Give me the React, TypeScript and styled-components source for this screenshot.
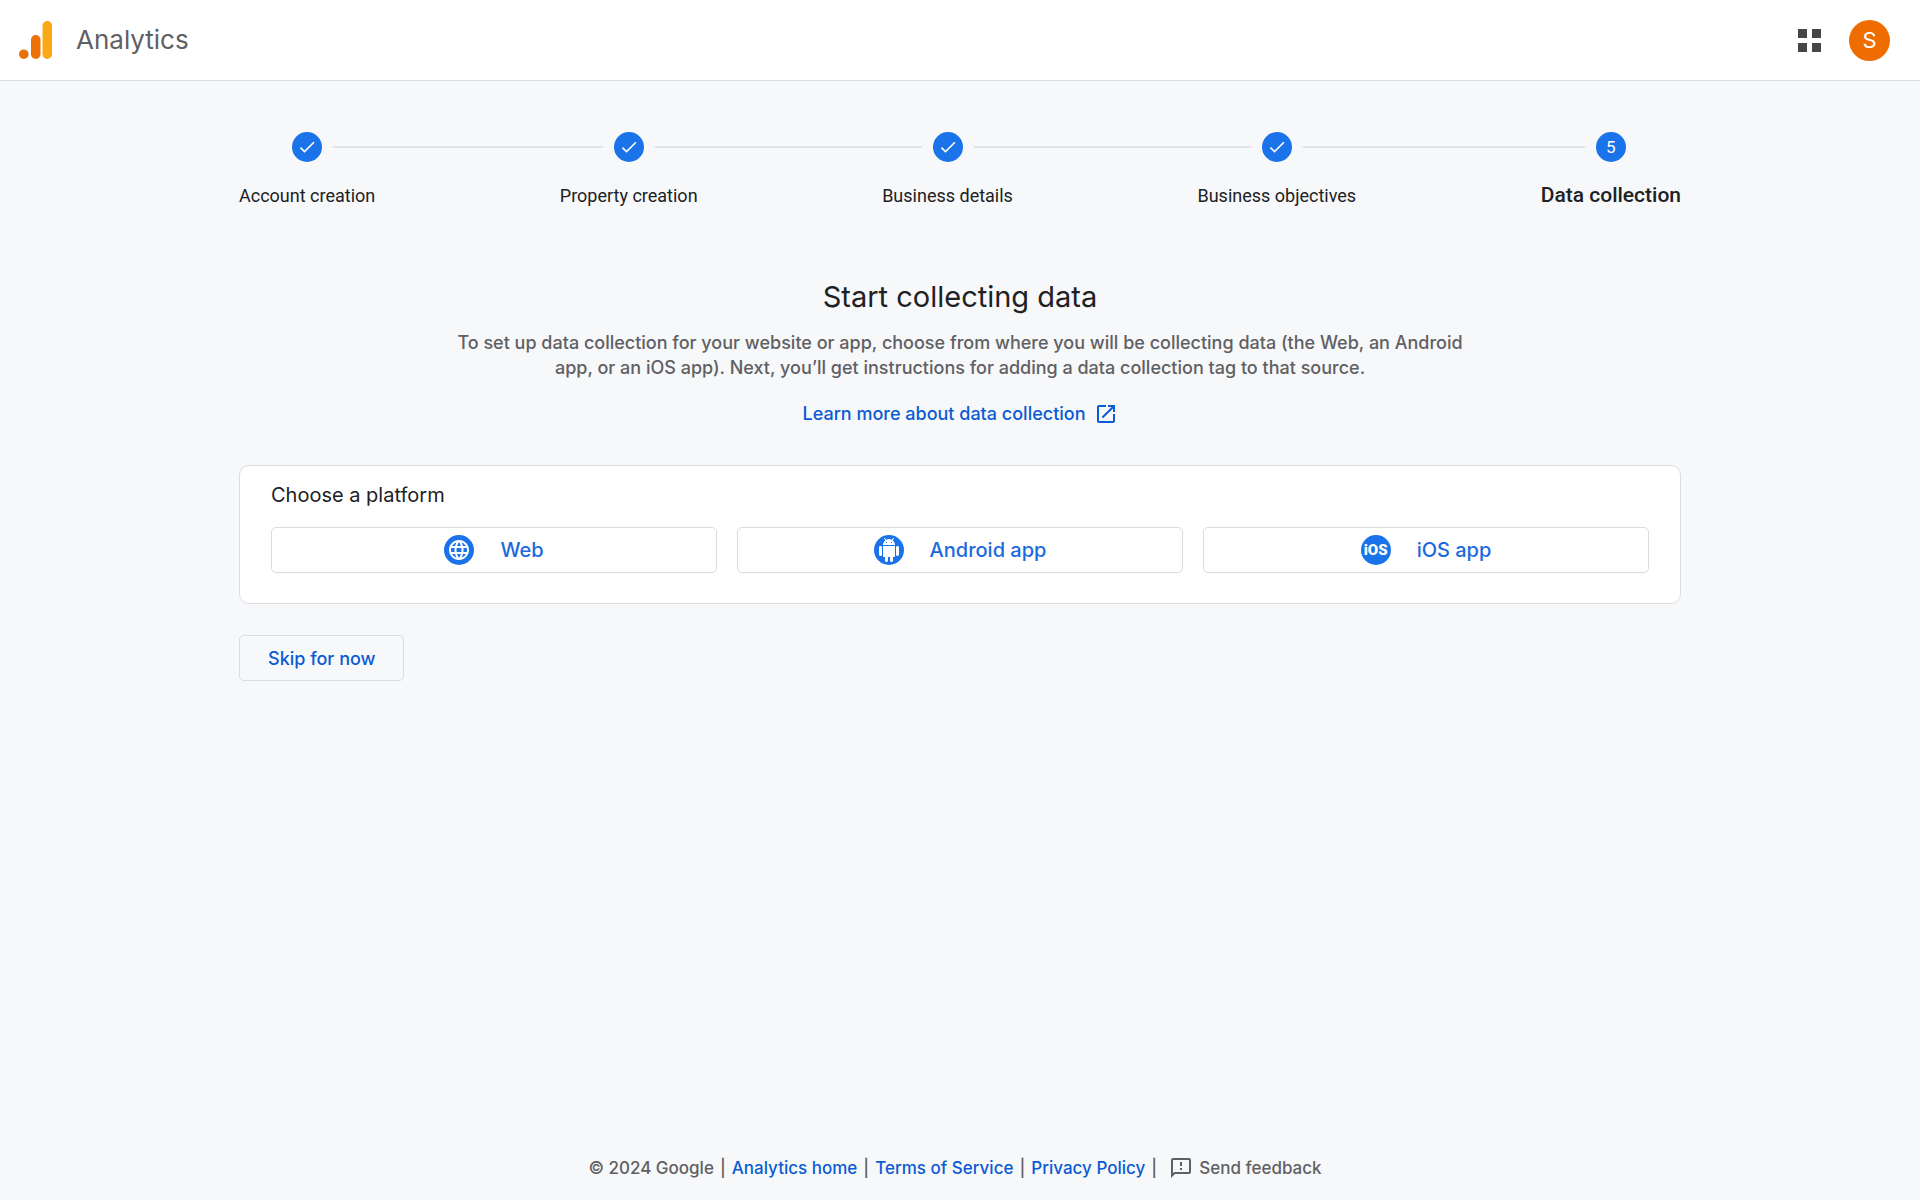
import React, { Fragment } from 'react';
import styled, { createGlobalStyle } from 'styled-components';

const color = {
  page: '#f7f8fa',
  surface: '#ffffff',
  text: '#202124',
  muted: '#5f6063',
  blue: '#1a73e8',
  link: '#0b5bd3',
  border: '#dadce0',
  orange: '#ef6c00',
};

const roboto = 'Roboto, "Liberation Sans", sans-serif';
const inter = 'Inter, "Liberation Sans", sans-serif';

const GlobalStyle = createGlobalStyle`
  *, *::before, *::after { box-sizing: border-box; }
  body {
    margin: 0;
    background: ${color.page};
    color: ${color.text};
    font-family: ${inter};
    font-size: 18px;
    line-height: 25px;
  }
  h1, h2, p, ol { margin: 0; padding: 0; }
  button { font: inherit; cursor: pointer; }
  a { color: ${color.link}; text-decoration: none; }
  a:hover { text-decoration: underline; }
`;

const Page = styled.div`
  min-height: 100vh;
  display: flex;
  flex-direction: column;
`;

const Header = styled.header`
  display: flex;
  align-items: center;
  justify-content: space-between;
  height: 81px;
  padding: 0 30px 0 19px;
  background: ${color.surface};
  border-bottom: 1px solid ${color.border};
`;

const Brand = styled.div`
  display: flex;
  align-items: center;
  gap: 24px;
  color: ${color.muted};
  font-size: 26px;
  line-height: 40px;
`;

const HeaderActions = styled.div`
  display: flex;
  align-items: center;
  gap: 20px;
`;

const IconButton = styled.button`
  display: grid;
  place-items: center;
  width: 40px;
  height: 40px;
  padding: 0;
  border: 0;
  background: none;
  color: #454746;
`;

const Avatar = styled.button`
  width: 41px;
  height: 41px;
  padding: 0;
  border: 0;
  border-radius: 50%;
  background: ${color.orange};
  color: #fff;
  font-size: 22px;
  line-height: 41px;
`;

const Main = styled.main`
  flex: 1;
  width: 100%;
  max-width: 1490px;
  margin: 0 auto;
  padding: 51px 24px 40px;
`;

const Stepper = styled.ol`
  display: flex;
  list-style: none;
  font-family: ${roboto};
`;

const Step = styled.li`
  flex: none;
`;

const Track = styled.div`
  display: flex;
  align-items: center;
  gap: 11px;
  height: 30px;
  margin-bottom: 21px;
`;

const Line = styled.span<{ $hidden?: boolean }>`
  flex: 1;
  height: 2px;
  background: ${(p) => (p.$hidden ? 'transparent' : '#e2e3e6')};
`;

const Connector = styled.li`
  flex: 1;
  display: flex;
  align-items: center;
  height: 30px;
`;

const Marker = styled.span`
  display: grid;
  place-items: center;
  width: 30px;
  height: 30px;
  border-radius: 50%;
  background: ${color.blue};
  color: #fff;
  font-size: 17px;
  line-height: 30px;
`;

const StepLabel = styled.span<{ $current: boolean }>`
  display: block;
  font-size: ${(p) => (p.$current ? 21 : 18)}px;
  font-weight: ${(p) => (p.$current ? 500 : 400)};
  line-height: 25px;
`;

const Intro = styled.section`
  display: flex;
  flex-direction: column;
  align-items: center;
  margin: 69px 0 39px;
  text-align: center;
  font-weight: 500;
`;

const Title = styled.h1`
  margin-bottom: 13px;
  font-size: 29px;
  font-weight: 400;
  line-height: 40px;
`;

const Lead = styled.p`
  max-width: 1020px;
  margin-bottom: 22px;
  color: ${color.muted};
`;

const LearnMore = styled.a`
  display: flex;
  align-items: center;
  gap: 8px;
  line-height: 24px;
`;

const Card = styled.section`
  padding: 15px 31px 30px;
  background: ${color.surface};
  border: 1px solid ${color.border};
  border-radius: 10px;
`;

const CardTitle = styled.h2`
  margin-bottom: 18px;
  font-size: 20px;
  font-weight: 400;
  line-height: 28px;
`;

const Platforms = styled.div`
  display: grid;
  grid-template-columns: repeat(3, 1fr);
  gap: 20px;
`;

const OutlineButton = styled.button`
  display: flex;
  align-items: center;
  justify-content: center;
  height: 46px;
  padding: 0 28px;
  border: 1px solid ${color.border};
  border-radius: 5px;
  background: transparent;
  color: ${color.link};
  font-weight: 500;
`;

const PlatformButton = styled(OutlineButton)`
  gap: 26px;
  color: #1a6ade;
  font-size: 20px;
`;

const SkipButton = styled(OutlineButton)`
  margin-top: 31px;
`;

const Footer = styled.footer`
  display: flex;
  flex-wrap: wrap;
  align-items: center;
  justify-content: center;
  gap: 6px;
  padding: 0 10px 20px 0;
  color: ${color.muted};
  font-size: 17px;
  font-weight: 500;
  line-height: 24px;
`;

const Feedback = styled.button`
  display: flex;
  align-items: center;
  gap: 6px;
  padding: 0 0 0 6px;
  border: 0;
  background: none;
  color: inherit;
`;

const Icon = ({ size = 24, d }: { size?: number; d: string }) => (
  <svg width={size} height={size} viewBox="0 0 24 24" fill="currentColor" aria-hidden="true">
    <path d={d} />
  </svg>
);

const icons = {
  check: 'M9 16.17L4.83 12l-1.42 1.41L9 19 21 7l-1.41-1.41z',
  external:
    'M19 19H5V5h7V3H5c-1.11 0-2 .9-2 2v14c0 1.1.89 2 2 2h14c1.1 0 2-.9 2-2v-7h-2v7zM14 3v2h3.59l-9.83 9.83 1.41 1.41L19 6.41V10h2V3h-7z',
  web: 'M11.99 2C6.47 2 2 6.48 2 12s4.47 10 9.99 10C17.52 22 22 17.52 22 12S17.52 2 11.99 2zm6.93 6h-2.95c-.32-1.25-.78-2.45-1.38-3.56 1.84.63 3.37 1.91 4.33 3.56zM12 4.04c.83 1.2 1.48 2.53 1.91 3.96h-3.82c.43-1.43 1.08-2.76 1.91-3.96zM4.26 14C4.1 13.36 4 12.69 4 12s.1-1.36.26-2h3.38c-.08.66-.14 1.32-.14 2s.06 1.34.14 2H4.26zm.82 2h2.95c.32 1.25.78 2.45 1.38 3.56-1.84-.63-3.37-1.9-4.33-3.56zm2.95-8H5.08c.96-1.66 2.49-2.93 4.33-3.56C8.81 5.55 8.35 6.75 8.03 8zM12 19.96c-.83-1.2-1.48-2.53-1.91-3.96h3.82c-.43 1.43-1.08 2.76-1.91 3.96zM14.34 14H9.66c-.09-.66-.16-1.32-.16-2s.07-1.35.16-2h4.68c.09.65.16 1.32.16 2s-.07 1.34-.16 2zm.25 5.56c.6-1.11 1.06-2.31 1.38-3.56h2.95c-.96 1.65-2.49 2.93-4.33 3.56zM16.36 14c.08-.66.14-1.32.14-2s-.06-1.34-.14-2h3.38c.16.64.26 1.31.26 2s-.1 1.36-.26 2h-3.38z',
  android:
    'M6 18c0 .55.45 1 1 1h1v3.5c0 .83.67 1.5 1.5 1.5s1.5-.67 1.5-1.5V19h2v3.5c0 .83.67 1.5 1.5 1.5s1.5-.67 1.5-1.5V19h1c.55 0 1-.45 1-1V8H6v10zM3.5 8C2.67 8 2 8.67 2 9.5v7c0 .83.67 1.5 1.5 1.5S5 17.33 5 16.5v-7C5 8.67 4.33 8 3.5 8zm17 0c-.83 0-1.5.67-1.5 1.5v7c0 .83.67 1.5 1.5 1.5s1.5-.67 1.5-1.5v-7c0-.83-.67-1.5-1.5-1.5zm-4.97-5.84l1.3-1.3c.2-.2.2-.51 0-.71-.2-.2-.51-.2-.71 0l-1.48 1.48C13.85 1.23 12.95 1 12 1c-.96 0-1.86.23-2.66.63L7.85.15c-.2-.2-.51-.2-.71 0-.2.2-.2.51 0 .71l1.31 1.31C6.97 3.26 6 5.01 6 7h12c0-1.99-.97-3.75-2.47-4.84zM10 5H9V4h1v1zm5 0h-1V4h1v1z',
  feedback:
    'M20 2H4c-1.1 0-2 .9-2 2v18l4-4h14c1.1 0 2-.9 2-2V4c0-1.1-.9-2-2-2zm0 14H5.17L4 17.17V4h16v12zM11 12h2v2h-2zm0-6h2v4h-2z',
};

const IosMark = styled.span`
  font-family: ${roboto};
  font-size: 15px;
  font-weight: 900;
  line-height: 30px;
`;

const AnalyticsLogo = () => (
  <svg width="33" height="38" viewBox="0 0 33 38" aria-hidden="true">
    <rect x="23.5" y="0" width="9.5" height="38" rx="4.7" fill="#fba817" />
    <rect x="12" y="14" width="9.5" height="24" rx="4.7" fill="#ec7004" />
    <circle cx="4.8" cy="33.2" r="4.8" fill="#e8710a" />
  </svg>
);

const AppsIcon = () => (
  <svg width="23" height="23" viewBox="0 0 23 23" fill="currentColor" aria-hidden="true">
    <path d="M0 0h9v9H0zM14 0h9v9h-9zM0 14h9v9H0zM14 14h9v9h-9z" />
  </svg>
);

const steps = [
  'Account creation',
  'Property creation',
  'Business details',
  'Business objectives',
  'Data collection',
];

const platforms = [
  { name: 'Web', mark: <Icon d={icons.web} /> },
  { name: 'Android app', mark: <Icon d={icons.android} /> },
  { name: 'iOS app', mark: <IosMark aria-hidden="true">iOS</IosMark> },
];

const footerLinks = ['Analytics home', 'Terms of Service', 'Privacy Policy'];

export default function App() {
  const last = steps.length - 1;
  return (
    <Page>
      <GlobalStyle />
      <Header>
        <Brand>
          <AnalyticsLogo />
          <span>Analytics</span>
        </Brand>
        <HeaderActions>
          <IconButton aria-label="Apps">
            <AppsIcon />
          </IconButton>
          <Avatar aria-label="Account">S</Avatar>
        </HeaderActions>
      </Header>

      <Main>
        <Stepper>
          {steps.map((label, i) => (
            <Fragment key={label}>
              {i > 0 && (
                <Connector aria-hidden="true">
                  <Line />
                </Connector>
              )}
              <Step aria-current={i === last ? 'step' : undefined}>
                <Track>
                  <Line $hidden={i === 0} />
                  <Marker>{i === last ? i + 1 : <Icon size={20} d={icons.check} />}</Marker>
                  <Line $hidden={i === last} />
                </Track>
                <StepLabel $current={i === last}>{label}</StepLabel>
              </Step>
            </Fragment>
          ))}
        </Stepper>

        <Intro>
          <Title>Start collecting data</Title>
          <Lead>
            To set up data collection for your website or app, choose from where you will be
            collecting data (the Web, an Android app, or an iOS app). Next, you’ll get instructions
            for adding a data collection tag to that source.
          </Lead>
          <LearnMore href="#learn-more">
            Learn more about data collection
            <Icon d={icons.external} />
          </LearnMore>
        </Intro>

        <Card>
          <CardTitle>Choose a platform</CardTitle>
          <Platforms>
            {platforms.map(({ name, mark }) => (
              <PlatformButton key={name}>
                <Marker>{mark}</Marker>
                {name}
              </PlatformButton>
            ))}
          </Platforms>
        </Card>

        <SkipButton>Skip for now</SkipButton>
      </Main>

      <Footer>
        <span>© 2024 Google</span>
        <span>|</span>
        {footerLinks.map((label) => (
          <Fragment key={label}>
            <a href="#footer">{label}</a>
            <span>|</span>
          </Fragment>
        ))}
        <Feedback>
          <Icon d={icons.feedback} />
          Send feedback
        </Feedback>
      </Footer>
    </Page>
  );
}
